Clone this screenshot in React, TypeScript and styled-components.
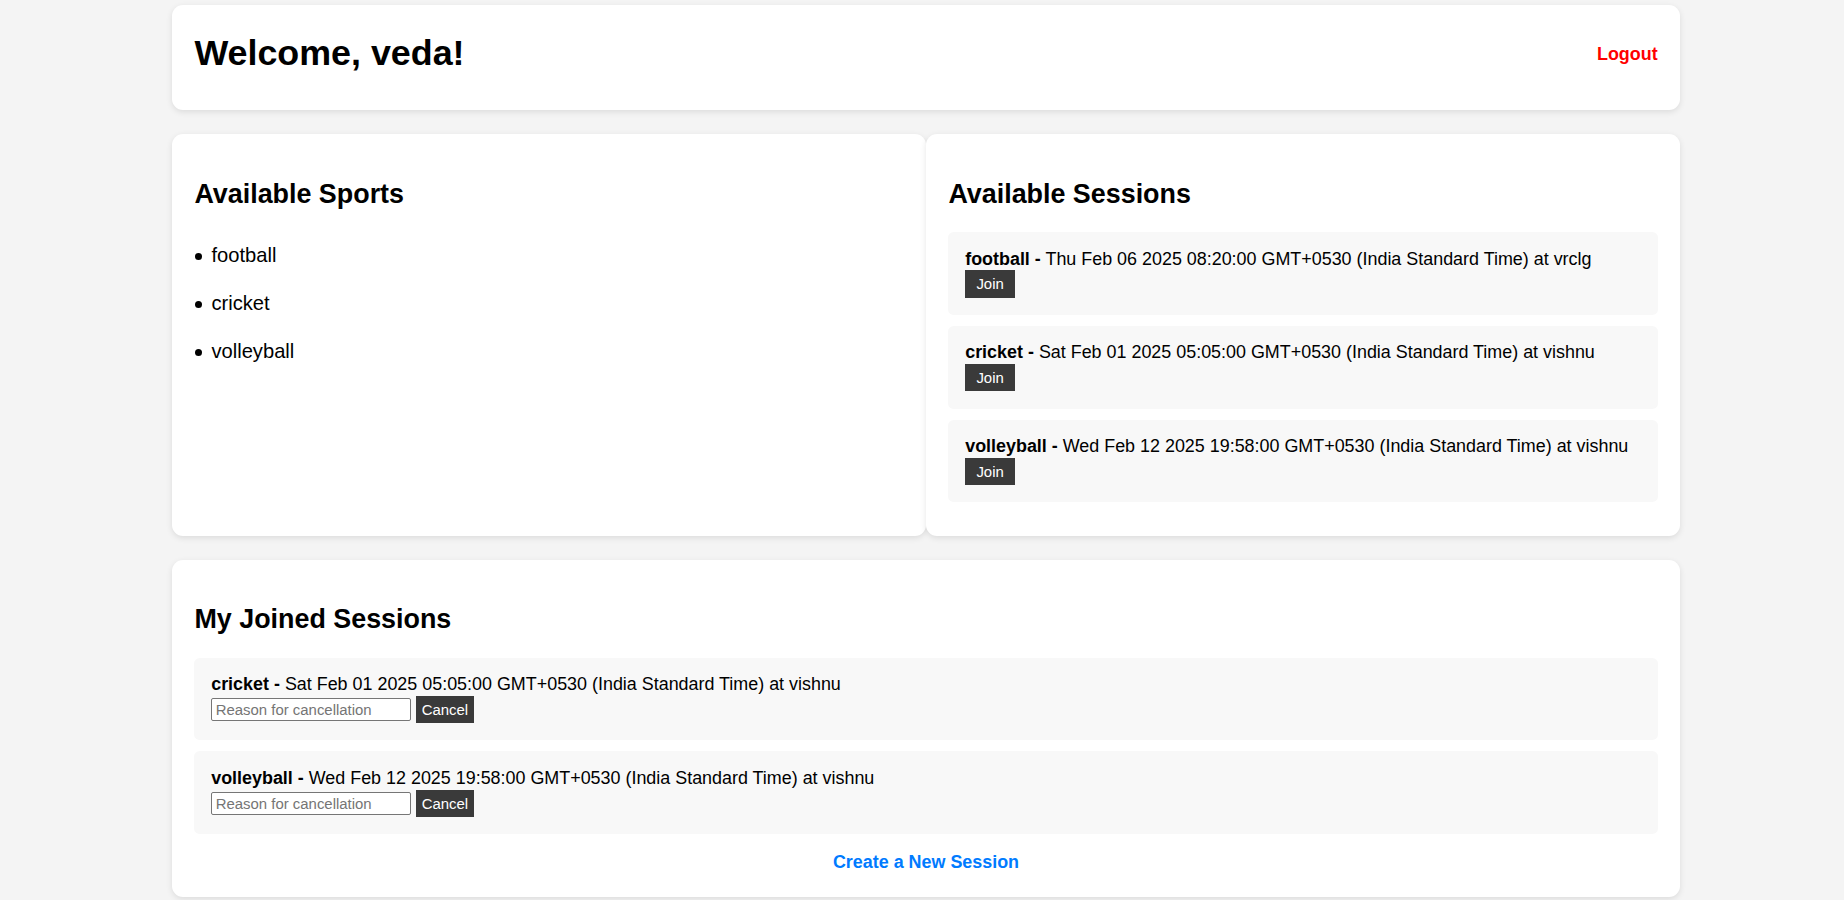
import React from "react";
import styled, { createGlobalStyle } from "styled-components";

const GlobalStyle = createGlobalStyle`
  html, body {
    margin: 0;
    padding: 0;
    background: #f4f4f4;
  }
  body {
    font-family: "Liberation Sans", Arial, Helvetica, sans-serif;
    color: #000;
  }
`;

const Page = styled.div`
  padding: 5px 0 4px 172px;
`;

const Container = styled.div`
  width: 1508px;
  display: flex;
  flex-direction: column;
  gap: 24px;
`;

const Card = styled.section`
  background: #fff;
  border-radius: 11px;
  box-shadow: 0 2px 6px rgba(0, 0, 0, 0.1);
  padding: 22.4px;
  box-sizing: border-box;
`;

const HeaderCard = styled(Card)`
  height: 105px;
  padding: 0 22.4px 7.6px;
  display: flex;
  align-items: center;
  justify-content: space-between;
`;

const Title = styled.h1`
  margin: 0;
  font-size: 35.84px;
  font-weight: bold;
  line-height: normal;
`;

const LogoutLink = styled.a`
  color: #ff0000;
  font-weight: bold;
  font-size: 17.92px;
  text-decoration: none;
  cursor: pointer;
  margin-top: 1px;
`;

const Columns = styled.div`
  display: flex;
`;

const ColumnCard = styled(Card)`
  flex: 1 1 0;
  min-width: 0;
`;

const SectionTitle = styled.h2`
  margin: 22.2px 0;
  font-size: 26.88px;
  font-weight: bold;
  line-height: normal;
`;

const SportsList = styled.ul`
  margin: 0;
  padding: 0;
  list-style: none;
`;

const SportItem = styled.li`
  display: flex;
  align-items: center;
  padding: 12.5px 0;
  font-size: 20.16px;
  line-height: normal;

  &::before {
    content: "";
    flex: none;
    width: 7px;
    height: 7px;
    border-radius: 50%;
    background: #000;
    margin: 2px 9.5px 0 0.5px;
  }
`;

const SessionItem = styled.div`
  background: #f8f8f8;
  border-radius: 5.6px;
  padding: 16.8px;
  margin-bottom: 11px;
  font-size: 17.92px;
  line-height: normal;
`;

const SessionLine = styled.div`
  white-space: nowrap;
`;

const ActionRow = styled.div`
  display: flex;
  align-items: center;
  gap: 5.3px;
  height: 28.3px;
`;

const DarkButton = styled.button<{ $wide?: boolean }>`
  background: #3a3a3a;
  color: #fff;
  border: none;
  border-radius: 0;
  margin: 0;
  font-family: "Liberation Sans", Arial, sans-serif;
  font-size: 14.93px;
  line-height: 17.1px;
  padding: 5.3px ${(p) => (p.$wide ? "11.2px" : "5.8px")};
  cursor: pointer;
`;

const ReasonInput = styled.input`
  box-sizing: border-box;
  width: 199.4px;
  height: 23.3px;
  margin: 0;
  border: 1px solid #767676;
  border-radius: 2px;
  padding: 1px 3.5px;
  font-family: "Liberation Sans", Arial, sans-serif;
  font-size: 14.93px;
  background: #fff;
  outline: none;

  &::placeholder {
    color: #757575;
  }
`;

const CreateLink = styled.a`
  display: block;
  margin-top: 17.5px;
  margin-bottom: 1.5px;
  text-align: center;
  color: #007bff;
  font-weight: bold;
  font-size: 17.92px;
  line-height: normal;
  text-decoration: none;
  cursor: pointer;
`;

type Session = { sport: string; date: string; place: string };

const available: Session[] = [
  { sport: "football", date: "Thu Feb 06 2025 08:20:00 GMT+0530 (India Standard Time)", place: "vrclg" },
  { sport: "cricket", date: "Sat Feb 01 2025 05:05:00 GMT+0530 (India Standard Time)", place: "vishnu" },
  { sport: "volleyball", date: "Wed Feb 12 2025 19:58:00 GMT+0530 (India Standard Time)", place: "vishnu" },
];

const joined: Session[] = [
  { sport: "cricket", date: "Sat Feb 01 2025 05:05:00 GMT+0530 (India Standard Time)", place: "vishnu" },
  { sport: "volleyball", date: "Wed Feb 12 2025 19:58:00 GMT+0530 (India Standard Time)", place: "vishnu" },
];

const sports = ["football", "cricket", "volleyball"];

const SessionText: React.FC<{ s: Session }> = ({ s }) => (
  <SessionLine>
    <strong>{s.sport} -</strong> {s.date} at {s.place}
  </SessionLine>
);

export default function App() {
  return (
    <>
      <GlobalStyle />
      <Page>
        <Container>
          <HeaderCard>
            <Title>Welcome, veda!</Title>
            <LogoutLink>Logout</LogoutLink>
          </HeaderCard>

          <Columns>
            <ColumnCard>
              <SectionTitle>Available Sports</SectionTitle>
              <SportsList>
                {sports.map((s) => (
                  <SportItem key={s}>{s}</SportItem>
                ))}
              </SportsList>
            </ColumnCard>
            <ColumnCard>
              <SectionTitle>Available Sessions</SectionTitle>
              {available.map((s) => (
                <SessionItem key={s.sport}>
                  <SessionText s={s} />
                  <ActionRow>
                    <DarkButton $wide>Join</DarkButton>
                  </ActionRow>
                </SessionItem>
              ))}
            </ColumnCard>
          </Columns>

          <Card>
            <SectionTitle>My Joined Sessions</SectionTitle>
            {joined.map((s) => (
              <SessionItem key={s.sport}>
                <SessionText s={s} />
                <ActionRow>
                  <ReasonInput placeholder="Reason for cancellation" />
                  <DarkButton>Cancel</DarkButton>
                </ActionRow>
              </SessionItem>
            ))}
            <CreateLink>Create a New Session</CreateLink>
          </Card>
        </Container>
      </Page>
    </>
  );
}
